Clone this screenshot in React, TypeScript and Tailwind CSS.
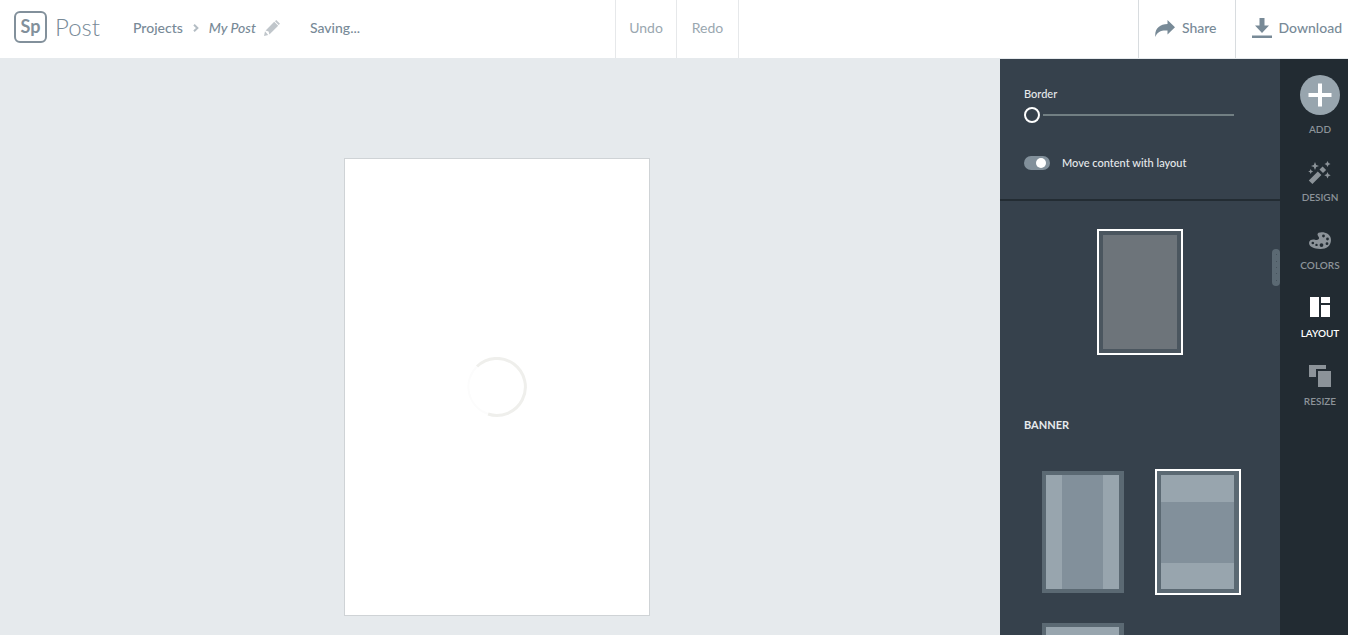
import { useState } from "react";
import clsx from "clsx";

interface RailItem {
  label: string;
  icon: React.ReactNode;
}

interface TileProps {
  label: string;
  selected?: boolean;
  muted?: boolean;
  onClick?: () => void;
  children?: React.ReactNode;
}

const PencilIcon = () => (
  <svg width="16" height="16" viewBox="0 0 16 16" fill="currentColor" aria-hidden="true">
    <path d="M0 16l1-4.800L4.200 15 0 16zM1.600 10.500L10.200 1.800l4 4L5.400 14.500 4.600 11.500 1.600 10.500zM11 1.200L12.200 0 16 3.700l-1.300 1.200L11 1.200z" />
  </svg>
);

const ChevronIcon = () => (
  <svg width="6" height="8" viewBox="0 0 6 8" fill="none" stroke="currentColor" strokeWidth="2" aria-hidden="true">
    <path d="M1 .7L4.400 4 1 7.300" />
  </svg>
);

const ShareIcon = () => (
  <svg width="20" height="17" viewBox="0 0 20 17" fill="currentColor" aria-hidden="true">
    <path d="M12.500 0L20 7.200l-7.500 7.300v-4C6.500 10 2 11.800 .4 17-.8 9 4.500 4 12.500 4V0z" />
  </svg>
);

const DownloadIcon = () => (
  <svg width="20" height="20" viewBox="0 0 20 20" fill="currentColor" aria-hidden="true">
    <path d="M7.500 0h5v7.500H17L10 15 3 7.500h4.500V0zM0 17.500h20V20H0z" />
  </svg>
);

const PlusIcon = () => (
  <svg width="24" height="24" viewBox="0 0 24 24" fill="currentColor" aria-hidden="true">
    <path d="M10 .5h4V10h9.500v4H14v9.500h-4V14H.5v-4H10V.5z" />
  </svg>
);

const WandIcon = () => (
  <svg width="24" height="24" viewBox="0 0 24 24" fill="currentColor" aria-hidden="true">
    <path d="M.8 19.500L9.800 10.500l3.600 3.600-9 8.900-3.600-3.500zM11.500 8.600L14.600 5.500l3.500 3.500-3.100 3.100-3.500-3.500z" />
    <path d="M7 1l1.200 3L11 5 8.200 6.100 7 9 5.800 6.100 3 5l2.800-1L7 1z" />
    <path d="M19.500 0l1 2 2 1-2 1-1 2-1-2-2-1 2-1 1-2z" />
    <path d="M19.500 11l1 2.200 2.200 1-2.200 1-1 2.300-1-2.300-2.200-1 2.200-1 1-2.200z" />
    <path d="M2.700 8l.8 1.700 1.700.8-1.700.8-.8 1.700-.8-1.700-1.700-.8 1.700-.8.800-1.700z" />
  </svg>
);

const PaletteIcon = () => (
  <svg width="24" height="24" viewBox="0 0 24 24" fill="currentColor" aria-hidden="true">
    <path
      fillRule="evenodd"
      d="M10.500 3.800C15 2.200 23 4.300 23 11c0 6-5 9.300-11 9C6 19.700 1 17.600 1 14c0-3 3.500-4 6-3.300 2.500.7 4.300-.3 4-2C10.600 7.200 8.200 5.500 10.500 3.800zM15.500 5.600a1.400 1.400 0 100 2.800 1.400 1.400 0 000-2.800zM19.500 8.600a1.400 1.400 0 100 2.800 1.400 1.400 0 000-2.800zM19 13.300a1.400 1.400 0 100 2.800 1.400 1.400 0 000-2.800zM13.500 14.200a1.900 1.900 0 100 3.800 1.900 1.900 0 000-3.800zM8.500 14.700a1.200 1.200 0 100 2.400 1.200 1.200 0 000-2.400zM4.800 12.700a1.300 1.300 0 100 2.600 1.300 1.300 0 000-2.600z"
    />
  </svg>
);

const LayoutIcon = () => (
  <svg width="24" height="24" viewBox="0 0 24 24" fill="currentColor" aria-hidden="true">
    <path d="M2 0h9v20H2zM13 0h9v6h-9zM13 8h9v12h-9z" />
  </svg>
);

const ResizeIcon = () => (
  <svg width="24" height="24" viewBox="0 0 24 24" fill="currentColor" aria-hidden="true">
    <path d="M1 0h17v4H8v8H1zM10 6h13v16H10z" />
  </svg>
);

const Spinner = () => (
  <svg width="60" height="60" viewBox="0 0 60 60" fill="none" role="status" aria-label="Loading">
    <path d="M10 9.500A28.500 28.500 0 1 1 21 57" stroke="#efefec" strokeWidth="3" />
    <path d="M10 9.500A28.500 28.500 0 0 0 21 57" stroke="#fcfcfc" strokeWidth="2" />
  </svg>
);

const Tile = ({ label, selected, muted, onClick, children }: TileProps) => (
  <button
    type="button"
    aria-label={label}
    aria-pressed={selected}
    onClick={onClick}
    className={clsx("h-[126px] w-[86px] border-2", selected ? "border-white" : "border-transparent")}
  >
    <span className={clsx("flex h-full w-full p-1", muted ? "bg-[#4b565f]" : "bg-[#5b6973] pr-[5px]")}>
      {children}
    </span>
  </button>
);

const RowBands = () => (
  <span className="flex flex-1 flex-col">
    <span className="h-[27px] bg-[#98a5ae]" />
    <span className="flex-1 bg-[#82909b]" />
    <span className="h-[26px] bg-[#98a5ae]" />
  </span>
);

const ColumnBands = () => (
  <span className="flex flex-1">
    <span className="w-4 bg-[#98a5ae]" />
    <span className="flex-1 bg-[#82909b]" />
    <span className="w-4 bg-[#98a5ae]" />
  </span>
);

const Header = () => (
  <header className="grid h-[59px] shrink-0 grid-cols-[1fr_124px_1fr] border-b border-[#e6eaed] bg-white pl-1.5 text-sm text-[#788a97]">
    <div className="flex items-center pl-2">
      <a href="#home" className="flex items-center gap-2 pb-1">
        <span className="flex h-8 w-[33px] items-center justify-center rounded-md border-2 border-[#82909b] pb-0.5 text-lg leading-none font-bold text-[#82909b]">
          Sp
        </span>
        <span className="text-2xl font-light">Post</span>
      </a>
      <nav className="flex items-center pb-0.5 pl-[33px] font-medium" aria-label="Breadcrumb">
        <a href="#projects">Projects</a>
        <span className="px-2.5 text-[#b4bdc4]">
          <ChevronIcon />
        </span>
        <button type="button" className="flex items-center gap-2">
          <em>My Post</em>
          <span className="text-[#c0c6cb]">
            <PencilIcon />
          </span>
        </button>
      </nav>
      <span className="pb-0.5 pl-[30px] font-medium">Saving...</span>
    </div>

    <div className="grid grid-cols-2 divide-x divide-[#e6e8ea] border-x border-[#e6e8ea] text-[#9aa7b0]">
      <button type="button" className="pb-0.5">
        Undo
      </button>
      <button type="button" className="pb-0.5">
        Redo
      </button>
    </div>

    <div className="flex justify-end font-medium">
      <button type="button" className="flex items-center gap-[7px] border-l border-[#d8dcdf] pr-[18px] pb-0.5 pl-4">
        <ShareIcon />
        Share
      </button>
      <button type="button" className="flex items-center gap-[7px] border-l border-[#d8dcdf] pr-1.5 pb-0.5 pl-4">
        <DownloadIcon />
        Download
      </button>
    </div>
  </header>
);

const LayoutPanel = () => {
  const [border, setBorder] = useState(0);
  const [moveContent, setMoveContent] = useState(true);

  return (
    <aside className="relative flex w-[280px] shrink-0 flex-col overflow-hidden bg-[#36414c] text-[11px] text-[#e6eaed]">
      <div className="h-[142px] shrink-0 border-b-2 border-[#232c33] px-6 pt-[27px] font-medium">
        <label htmlFor="border" className="block leading-4">
          Border
        </label>
        <input
          id="border"
          type="range"
          min={0}
          max={100}
          value={border}
          onChange={(e) => setBorder(Number(e.target.value))}
          className="mt-[5px] block h-4 w-[210px] appearance-none bg-[linear-gradient(#727f83,#727f83)] bg-[length:191px_2px] bg-right bg-no-repeat [&::-webkit-slider-thumb]:h-4 [&::-webkit-slider-thumb]:w-4 [&::-webkit-slider-thumb]:appearance-none [&::-webkit-slider-thumb]:rounded-full [&::-webkit-slider-thumb]:border-2 [&::-webkit-slider-thumb]:border-white [&::-webkit-slider-thumb]:bg-[#36414c]"
        />
        <label className="mt-8 flex items-center gap-3 leading-4">
          <input
            type="checkbox"
            role="switch"
            checked={moveContent}
            onChange={(e) => setMoveContent(e.target.checked)}
            className="flex h-3.5 w-[26px] appearance-none items-center rounded-full bg-[#82909b] px-1 before:size-2.5 before:rounded-full before:bg-white checked:justify-end"
          />
          Move content with layout
        </label>
      </div>

      <div className="flex min-h-0 flex-1 flex-col overflow-hidden">
        <div className="flex shrink-0 justify-center pt-7">
          <Tile label="Plain" selected muted>
            <span className="flex-1 bg-[#6d747a]" />
          </Tile>
        </div>
        <h2 className="px-6 pt-[62px] leading-4 font-bold">BANNER</h2>
        <div className="grid shrink-0 grid-cols-[86px_86px] gap-x-[29px] gap-y-[26px] px-10 pt-9">
          <Tile label="Columns">
            <ColumnBands />
          </Tile>
          <Tile label="Rows" selected>
            <RowBands />
          </Tile>
          <Tile label="Top banner">
            <RowBands />
          </Tile>
        </div>
      </div>

      {/* Scroll handle */}
      <div className="absolute top-[190px] right-0 flex h-[37px] w-2 flex-col items-center justify-evenly rounded-full bg-[#5b6973]">
        {[0, 1, 2, 3, 4].map((dot) => (
          <span key={dot} className="size-px bg-[#46525c]" />
        ))}
      </div>
    </aside>
  );
};

const ToolRail = () => {
  const [active, setActive] = useState("LAYOUT");

  const items: RailItem[] = [
    { label: "DESIGN", icon: <WandIcon /> },
    { label: "COLORS", icon: <PaletteIcon /> },
    { label: "LAYOUT", icon: <LayoutIcon /> },
    { label: "RESIZE", icon: <ResizeIcon /> },
  ];

  return (
    <nav className="flex w-[68px] shrink-0 flex-col gap-6 bg-[#222b32] pt-4 pl-3 text-[10px] leading-4 font-semibold text-[#8c9399]">
      <button type="button" className="flex flex-col items-center gap-1.5">
        <span className="flex size-10 items-center justify-center rounded-full bg-[#98a5ae] text-white">
          <PlusIcon />
        </span>
        ADD
      </button>
      {items.map((item) => (
        <button
          key={item.label}
          type="button"
          onClick={() => setActive(item.label)}
          className={clsx("flex flex-col items-center gap-1", active === item.label && "text-white")}
        >
          {item.icon}
          {item.label}
        </button>
      ))}
    </nav>
  );
};

const App = () => (
  <div className="flex h-screen flex-col overflow-hidden font-['Lato',sans-serif]">
    <Header />
    <div className="flex min-h-0 flex-1">
      <main className="flex flex-1 items-start justify-center bg-[#e6eaed] pt-[99px] pr-1.5">
        <div className="flex h-[458px] w-[306px] items-center justify-center border border-[#cfd3d6] bg-white">
          <Spinner />
        </div>
      </main>
      <LayoutPanel />
      <ToolRail />
    </div>
  </div>
);

export default App;
